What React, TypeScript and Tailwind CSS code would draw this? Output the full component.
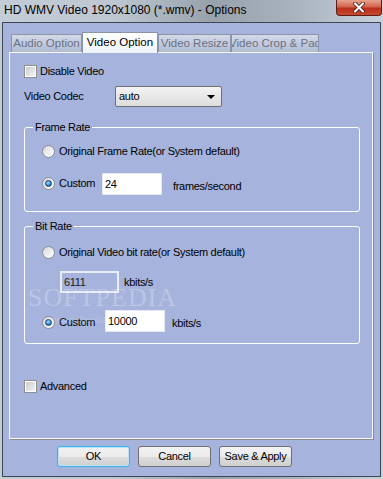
import React from 'react';

const font = { fontFamily: '"Liberation Sans", Arial, sans-serif' };

function Radio({ checked }: { checked?: boolean }) {
  return (
    <span className="flex h-[13px] w-[13px] shrink-0 items-center justify-center rounded-full border border-[#8a8d92] bg-[linear-gradient(135deg,#d6d8dc,#ffffff)]">
      {checked && (
        <span className="h-[7px] w-[7px] rounded-full border border-[#1b3e6e] bg-[radial-gradient(circle_at_40%_35%,#a6e0ff_0%,#2f8bd6_55%,#174f93_100%)]" />
      )}
    </span>
  );
}

function Check() {
  return (
    <span className="flex h-[13px] w-[13px] shrink-0 items-center justify-center border border-[#8e8f8f] bg-white">
      <span className="h-[9px] w-[9px] bg-[linear-gradient(135deg,#c9cbce,#f4f5f6)]" />
    </span>
  );
}

function TextBox({ value, width, disabled }: { value: string; width: string; disabled?: boolean }) {
  return (
    <div
      className={
        disabled
          ? `flex h-[22px] ${width} items-center border-2 border-[#e9edf5] bg-[#a6b3dc] pl-[2px] text-[#202020]`
          : `flex h-[22px] ${width} items-center border border-[#e4e8f0] bg-white pl-[2px] text-black`
      }
    >
      {value}
    </div>
  );
}

const tabs = [
  { label: 'Audio Option', w: 'w-[71px]' },
  { label: 'Video Option', w: 'w-[76px]', active: true },
  { label: 'Video Resize', w: 'w-[73px]' },
  { label: 'Video Crop & Pad', w: 'w-[88px]' },
];

export default function App() {
  return (
    <div
      className="relative h-[479px] w-[383px] overflow-hidden bg-[linear-gradient(90deg,#c3cdd7_0%,#bdc7d1_30%,#98a2ad_55%,#a7b1bc_75%,#c7d1db_100%)] text-[11px]"
      style={font}
    >
      {/* title bar */}
      <div className="flex h-[22px] items-start">
        <div className="pl-[4px] pt-[3px] text-[12px] leading-[15px] text-black">
          HD WMV Video 1920x1080 (*.wmv) - Options
        </div>
        <div className="flex-1" />
        <div className="mr-[1px] flex h-[16px] w-[46px] items-center justify-center rounded-b-[4px] border border-t-0 border-[#5b1d14] bg-[linear-gradient(180deg,#e7a390_0%,#d2644a_45%,#b9301c_55%,#c84a2e_100%)]">
          <svg width="12" height="11" viewBox="0 0 12 11">
            <path d="M2 1.5 L10 9.5 M10 1.5 L2 9.5" stroke="#3b1008" strokeWidth="3.6" strokeLinecap="round" />
            <path d="M2 1.5 L10 9.5 M10 1.5 L2 9.5" stroke="#ffffff" strokeWidth="2.2" strokeLinecap="round" />
          </svg>
        </div>
      </div>

      {/* client area */}
      <div className="ml-[2px] h-[455px] w-[379px] border border-[#3d4752] bg-[#a6b3dc] tracking-[-0.3px]">
        {/* tabs */}
        <div className="ml-[8px] mt-[9px] flex h-[20px] items-end tracking-normal">
          {tabs.map(t =>
            t.active ? (
              <div
                key={t.label}
                className={`relative z-10 -mb-[1px] flex h-[21px] ${t.w} items-center justify-center border border-b-0 border-[#8c94aa] bg-[linear-gradient(180deg,#ffffff,#eef3f8)] text-[11.5px] text-black`}
              >
                {t.label}
              </div>
            ) : (
              <div
                key={t.label}
                className={`flex h-[18px] ${t.w} items-center justify-center overflow-hidden whitespace-nowrap border border-b-0 border-[#8c94aa] bg-[linear-gradient(180deg,#d3d9e8,#b2bbd4)] text-[11.5px] text-[#6a7182]`}
              >
                {t.label}
              </div>
            ),
          )}
        </div>

        {/* tab panel */}
        <div className="ml-[6px] h-[387px] w-[364px] border border-[#f7f8fb] shadow-[1px_1px_0_#8c8c8c]">
          <div className="pl-[14px] pt-[12px]">
            <div className="flex h-[13px] items-center gap-[3px]">
              <Check />
              <span>Disable Video</span>
            </div>

            <div className="mt-[8px] flex h-[21px] items-center">
              <span className="w-[91px]">Video Codec</span>
              <div className="flex h-[21px] w-[107px] items-center justify-between rounded-[2px] border border-[#707070] bg-[linear-gradient(180deg,#f3f3f3,#dddddd)] pl-[3px] pr-[6px]">
                <span>auto</span>
                <svg width="8" height="4" viewBox="0 0 8 4">
                  <path d="M0 0 H8 L4 4 Z" fill="#000" />
                </svg>
              </div>
            </div>

            {/* Frame Rate */}
            <fieldset className="mt-[14px] h-[91px] w-[336px] rounded-[3px] border border-white pl-[17px]">
              <legend className="ml-[-9px] px-[2px] leading-[13px]">Frame Rate</legend>
              <div className="mt-[11px] flex h-[13px] items-center gap-[4px]">
                <Radio />
                <span>Original Frame Rate(or System default)</span>
              </div>
              <div className="mt-[15px] flex items-start">
                <div className="mt-[2px] flex w-[60px] items-center gap-[4px]">
                  <Radio checked />
                  <span>Custom</span>
                </div>
                <TextBox value="24" width="w-[60px]" />
                <span className="ml-[11px] mt-[5px]">frames/second</span>
              </div>
            </fieldset>

            {/* Bit Rate */}
            <fieldset className="mt-[8px] h-[124px] w-[336px] rounded-[3px] border border-white pl-[17px]">
              <legend className="ml-[-9px] px-[2px] leading-[13px]">Bit Rate</legend>
              <div className="mt-[13px] flex h-[13px] items-center gap-[4px]">
                <Radio />
                <span>Original Video bit rate(or System default)</span>
              </div>
              <div className="ml-[18px] mt-[12px] flex items-center">
                <TextBox value="6111" width="w-[59px]" disabled />
                <span className="ml-[5px]">kbits/s</span>
              </div>
              <div className="mt-[17px] flex items-start">
                <div className="mt-[4px] flex w-[63px] items-center gap-[4px]">
                  <Radio checked />
                  <span>Custom</span>
                </div>
                <TextBox value="10000" width="w-[60px]" />
                <span className="ml-[7px] mt-[5px]">kbits/s</span>
              </div>
            </fieldset>

            <div className="mt-[36px] flex h-[13px] items-center gap-[3px]">
              <Check />
              <span>Advanced</span>
            </div>
          </div>
        </div>

        {/* buttons */}
        <div className="ml-[54px] mt-[7px] flex gap-[8px]">
          <button className="h-[21px] w-[73px] rounded-[3px] border border-[#3ab4e8] bg-[linear-gradient(180deg,#f2f2f2_0%,#ebebeb_50%,#dddddd_51%,#cfcfcf_100%)] shadow-[inset_0_0_0_1px_#b8e6f8] text-black">
            OK
          </button>
          <button className="h-[21px] w-[73px] rounded-[3px] border border-[#707070] bg-[linear-gradient(180deg,#f2f2f2_0%,#ebebeb_50%,#dddddd_51%,#cfcfcf_100%)] text-black">
            Cancel
          </button>
          <button className="h-[21px] w-[73px] rounded-[3px] border border-[#707070] bg-[linear-gradient(180deg,#f2f2f2_0%,#ebebeb_50%,#dddddd_51%,#cfcfcf_100%)] text-black">
            Save &amp; Apply
          </button>
        </div>
      </div>

      {/* watermark */}
      <div className="pointer-events-none absolute left-[28px] top-[278px] text-[26px] tracking-[1px] text-white/25" style={{ fontFamily: '"Liberation Serif", serif' }}>
        SOFTPEDIA
      </div>
      <div className="pointer-events-none absolute left-[48px] top-[314px] text-[9px] text-white/20">www.softpedia.com</div>
    </div>
  );
}
